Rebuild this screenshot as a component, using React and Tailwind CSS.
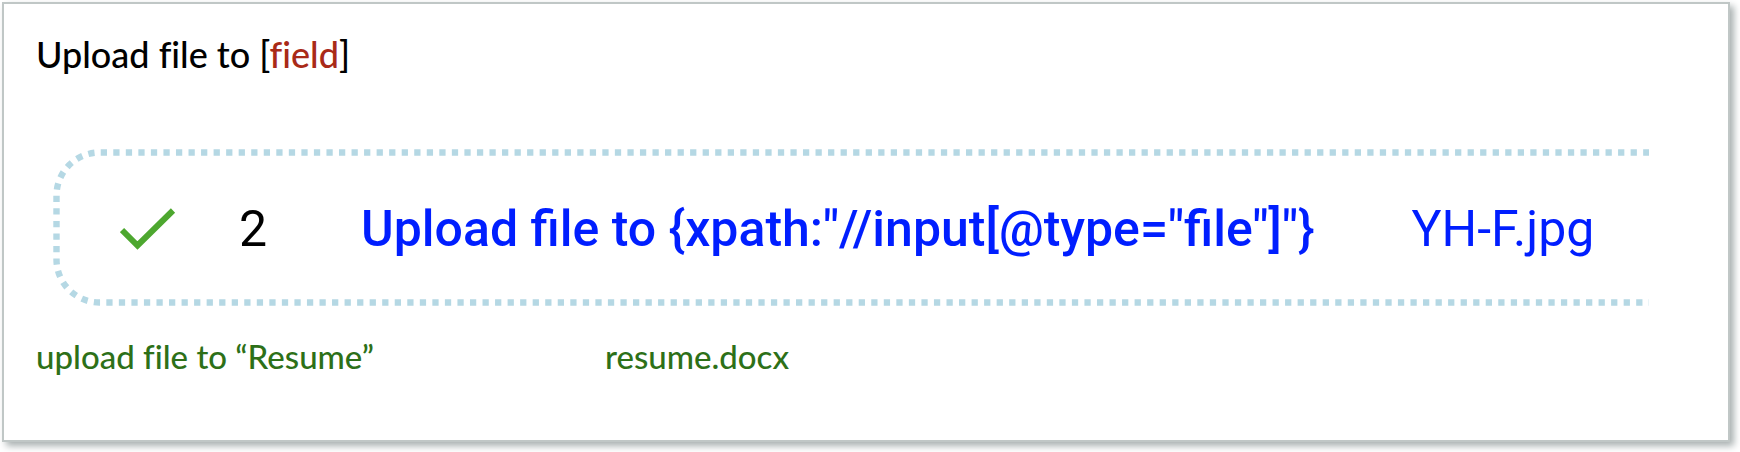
function DottedFrame() {
  return (
    <svg
      className="absolute inset-0 h-full w-full overflow-hidden"
      fill="none"
      stroke="#b5d8e4"
      strokeWidth="6.4"
      strokeDasharray="6.27 6.27"
      aria-hidden="true"
    >
      <path d="M3816 3.5H46.5A43 43 0 0 0 3.5 46.5V110.5A43 43 0 0 0 46.5 153.5H3816" />
    </svg>
  );
}

function CheckIcon() {
  return (
    <svg className="h-[42px] w-[56px] shrink-0" viewBox="0 0 56 42" fill="none" aria-hidden="true">
      <path d="M2 22L17.5 37.5L53 2.5" stroke="#4da72f" strokeWidth="6" />
    </svg>
  );
}

export default function App() {
  return (
    <main className="bg-white pt-[2px] pr-[10px] pb-[10px] pl-[2px] font-['Lato',sans-serif] font-medium [font-variant-ligatures:none]">
      <section className="border-2 border-[#c0c7c6] bg-white pt-7 pr-[79px] pb-16 pl-8 shadow-[4px_4px_7px_#a9b1b1]">
        <h1 className="text-[36px] leading-[44px] text-black">
          Upload file to [<span className="text-[#a92a18]">field</span>]
        </h1>
        <div className="relative mt-[73px] ml-[17px] flex h-[157px] items-center overflow-hidden whitespace-nowrap pt-[2px] pl-[67px] font-['Roboto',sans-serif] text-[50px] leading-[60px] [font-variant-ligatures:normal]">
          <DottedFrame />
          <CheckIcon />
          <span className="ml-[63px] w-[122px] font-normal text-black">2</span>
          <span className="font-medium text-[#001eff]">
            {'Upload file to {xpath:"//input[@type="file"]"}'}
          </span>
          <span className="ml-[97px] font-normal text-[#001eff]">YH-F.jpg</span>
        </div>
        <div className="mt-[30px] flex text-[33px] leading-10 text-[#2d7018]">
          <p className="w-[569px]">upload file to “Resume”</p>
          <p>resume.docx</p>
        </div>
      </section>
    </main>
  );
}
